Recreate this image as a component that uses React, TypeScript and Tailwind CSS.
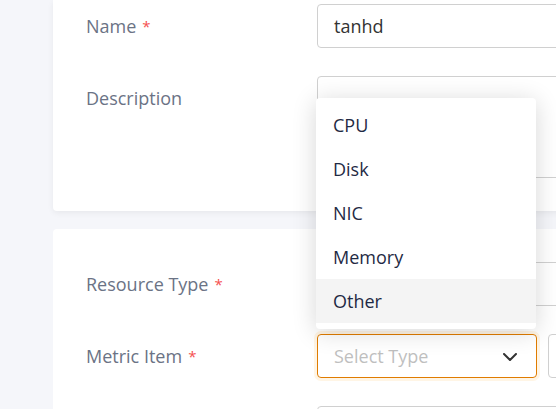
const font = { fontFamily: '"Open Sans", "Noto Sans", sans-serif' };

const Label = ({ text, required }: { text: string; required?: boolean }) => (
  <div className="w-[231px] shrink-0 h-[44px] flex items-center text-[18px] text-[#6b7385]">
    {text}
    {required && <span className="ml-[6px] text-[15px] text-[#f5504f]">*</span>}
  </div>
);

const options = ["CPU", "Disk", "NIC", "Memory", "Other"];

export default function App() {
  return (
    <div
      className="w-[556px] h-[409px] overflow-hidden bg-[#f5f6fa] pl-[53px]"
      style={font}
    >
      <div className="w-[700px] flex flex-col gap-[18px]">
        {/* Basic info card */}
        <div className="bg-white rounded-b-[4px] shadow-[0_2px_6px_rgba(0,0,0,0.06)] pl-[33px] pt-[4px] pb-[33px] flex flex-col gap-[28px]">
          <div className="flex">
            <Label text="Name" required />
            <div className="flex-1 h-[44px] border border-[#d0d0d0] rounded-[4px] flex items-center px-[16px] text-[18px] text-[#333]">
              tanhd
            </div>
          </div>
          <div className="flex">
            <Label text="Description" />
            <div className="flex-1 h-[102px] border border-[#d0d0d0] rounded-[4px]" />
          </div>
        </div>

        {/* Metric card */}
        <div className="bg-white rounded-t-[4px] pl-[33px] pt-[33px] flex flex-col gap-[28px]">
          <div className="flex">
            <Label text="Resource Type" required />
            <div className="flex-1 h-[44px] border border-[#d0d0d0] rounded-[4px]" />
          </div>
          <div className="flex">
            <Label text="Metric Item" required />
            <div className="relative flex gap-[11px] flex-1">
              {/* opened dropdown */}
              <div className="absolute left-[-1px] bottom-[49px] w-[220px] bg-white rounded-[4px] pt-[5px] pb-[6px] shadow-[0_3px_24px_rgba(0,0,0,0.16)] z-10">
                {options.map((o) => (
                  <div
                    key={o}
                    className={`h-[44px] flex items-center pl-[17px] text-[18px] text-[#1f2a44] ${
                      o === "Other" ? "bg-[#f4f4f4]" : ""
                    }`}
                  >
                    {o}
                  </div>
                ))}
              </div>
              <div className="w-[220px] h-[44px] border border-[#e07c00] rounded-[4px] flex items-center justify-between pl-[16px] pr-[19px] shadow-[0_0_0_3px_rgba(255,170,40,0.12)]">
                <span className="text-[18px] text-[#bfbfbf]">Select Type</span>
                <svg width="14" height="8" viewBox="0 0 14 8" fill="none" className="mt-[2px]">
                  <path d="M1 1l6 6 6-6" stroke="#333" strokeWidth="2" strokeLinecap="round" strokeLinejoin="round" />
                </svg>
              </div>
              <div className="flex-1 h-[44px] border border-[#d0d0d0] rounded-[4px]" />
            </div>
          </div>
          <div className="flex">
            <div className="w-[231px] shrink-0" />
            <div className="flex-1 h-[44px] border border-[#d0d0d0] rounded-[4px]" />
          </div>
        </div>
      </div>
    </div>
  );
}
